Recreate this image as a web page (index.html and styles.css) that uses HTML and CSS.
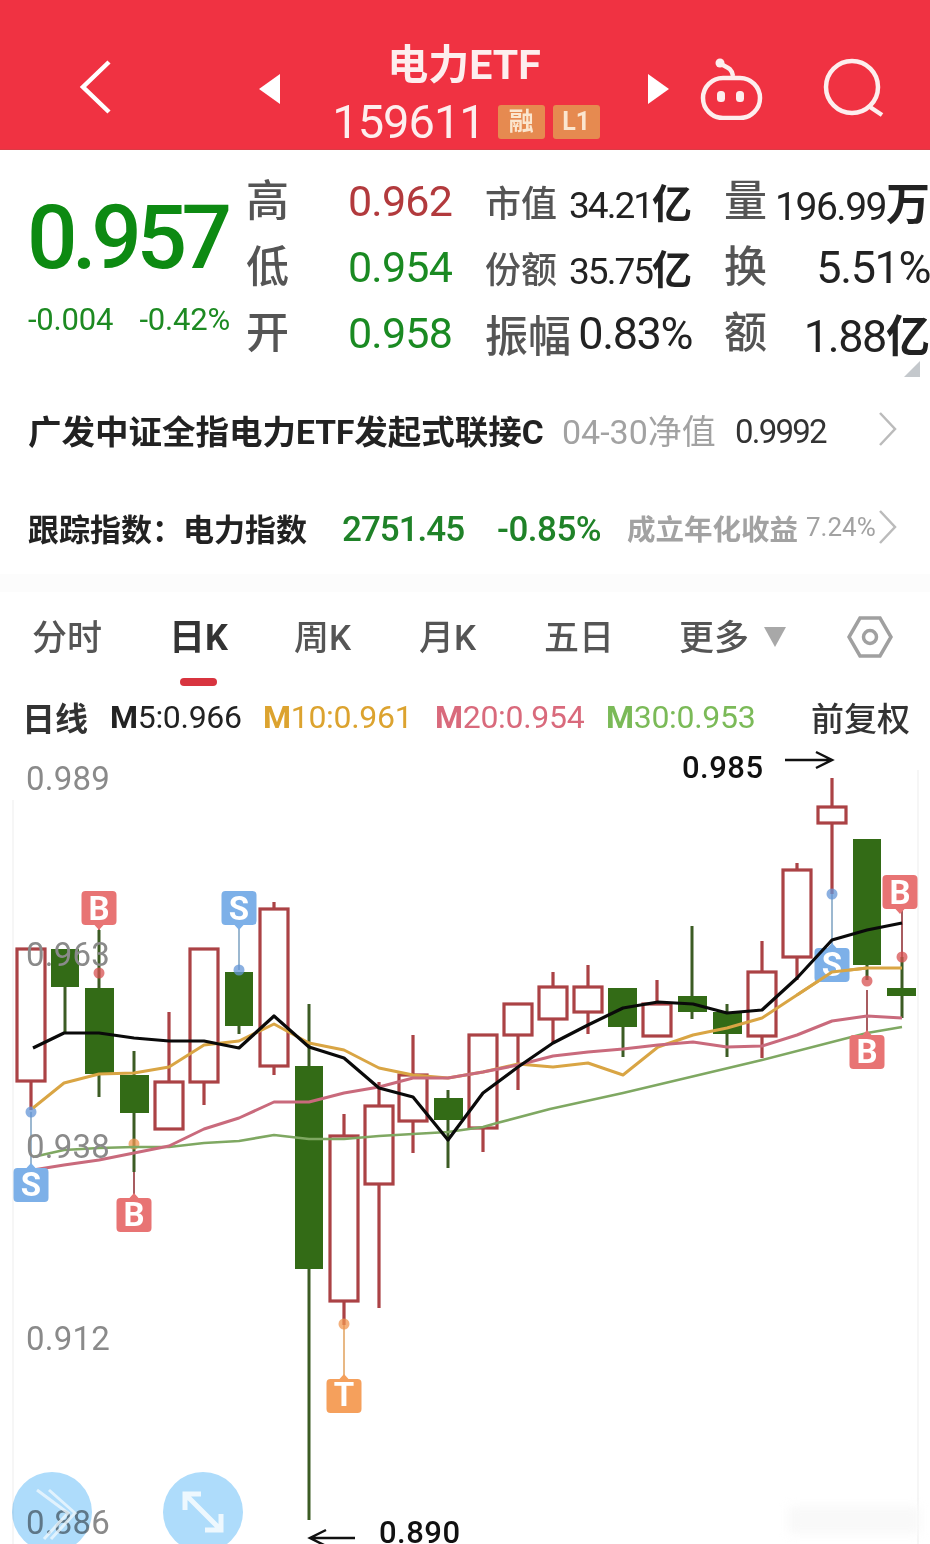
FILE: index.html
```html
<!DOCTYPE html>
<html lang="zh-CN">
<head>
    <meta charset="UTF-8">
    <title>电力ETF</title>
    <link rel="stylesheet" href="styles.css">
</head>
<body>
<div class="page">
    <header class="topbar">
        <svg class="icon-back" viewBox="0 0 36 56"><path d="M31 3L5 28l26 25"/></svg>
        <svg class="icon-tri" viewBox="0 0 26 32"><path d="M24 1L3 16l21 15z"/></svg>
        <div class="title">
            <div class="title-name">电力ETF</div>
            <div class="title-code">
                <span class="code-num">159611</span>
                <span class="tag">融</span>
                <span class="tag">L1</span>
            </div>
        </div>
        <svg class="icon-tri" viewBox="0 0 26 32"><path d="M2 1l21 15L2 31z"/></svg>
        <svg class="icon-robot" viewBox="0 0 66 62">
            <path d="M35 18C34 10 28 9 23 6"/>
            <circle class="solid" cx="22" cy="5" r="4.5"/>
            <rect x="5" y="20" width="57" height="40" rx="20"/>
            <rect class="solid" x="19" y="33" width="8" height="11" rx="3.5"/>
            <rect class="solid" x="38" y="33" width="8" height="11" rx="3.5"/>
        </svg>
        <svg class="icon-search" viewBox="0 0 64 64">
            <circle cx="30" cy="30" r="26"/>
            <path d="M48 50l12 8"/>
        </svg>
    </header>

    <section class="quote">
        <div class="price">
            <div class="price-now">0.957</div>
            <div class="price-change"><span>-0.004</span><span>-0.42%</span></div>
        </div>
        <div class="stats">
            <span class="stat-label">高</span><span class="stat-value red">0.962</span>
            <div class="stat-pair"><span class="pair-label">市值</span><span class="pair-value">34.21<b>亿</b></span></div>
            <div class="stat-pair wide"><span class="stat-label">量</span><span class="pair-value mid">196.99<b>万</b></span></div>

            <span class="stat-label">低</span><span class="stat-value green">0.954</span>
            <div class="stat-pair"><span class="pair-label">份额</span><span class="pair-value">35.75<b>亿</b></span></div>
            <div class="stat-pair wide"><span class="stat-label">换</span><span class="pair-value big">5.51%</span></div>

            <span class="stat-label">开</span><span class="stat-value green">0.958</span>
            <div class="stat-pair"><span class="pair-label large">振幅</span><span class="pair-value big">0.83%</span></div>
            <div class="stat-pair wide"><span class="stat-label">额</span><span class="pair-value big">1.88<b>亿</b></span></div>
        </div>
        <span class="corner"></span>
    </section>

    <section class="fund-row first">
        <span class="fund-name">广发中证全指电力ETF发起式联接C</span>
        <span class="fund-date">04-30净值</span>
        <span class="fund-nav">0.9992</span>
        <svg class="chevron" viewBox="0 0 20 36"><path d="M2 2l15 16L2 34"/></svg>
    </section>
    <section class="fund-row second">
        <span class="index-name">跟踪指数：电力指数</span>
        <span class="index-val">2751.45</span>
        <span class="index-pct">-0.85%</span>
        <span class="index-yield">成立年化收益</span>
        <span class="index-yield-num">7.24%</span>
        <svg class="chevron" viewBox="0 0 20 36"><path d="M2 2l15 16L2 34"/></svg>
    </section>
    <div class="band"></div>

    <nav class="tabs">
        <span class="tab">分时</span>
        <span class="tab active">日K</span>
        <span class="tab">周K</span>
        <span class="tab">月K</span>
        <span class="tab">五日</span>
        <span class="tab more">更多<i class="more-arrow"></i></span>
        <svg class="icon-hex" viewBox="0 0 46 42">
            <path d="M13 2h20l11 19-11 19H13L2 21z"/>
            <circle cx="23" cy="21" r="6.5"/>
        </svg>
    </nav>

    <div class="legend">
        <span class="legend-name">日线</span>
        <span class="ma m5"><b>M</b>5:0.966</span>
        <span class="ma m10"><b>M</b>10:0.961</span>
        <span class="ma m20"><b>M</b>20:0.954</span>
        <span class="ma m30"><b>M</b>30:0.953</span>
        <span class="legend-adj">前复权</span>
    </div>

    <svg class="chart" viewBox="0 745 930 799">
        <defs>
            <path id="flag-down" d="M-13.5 0h27a4 4 0 0 1 4 4v26a4 4 0 0 1-4 4h-9l-4.5 5-4.5-5h-9a4 4 0 0 1-4-4V4a4 4 0 0 1 4-4z"/>
            <path id="flag-up" d="M-13.5 0h27a4 4 0 0 0 4-4v-26a4 4 0 0 0-4-4h-9l-4.5-5-4.5 5h-9a4 4 0 0 0-4 4v26a4 4 0 0 0 4 4z"/>
        </defs>

        <!-- 边框 -->
        <path class="frame" d="M13 800V1544M918 770V1544"/>
        <rect class="smudge" x="788" y="1506" width="132" height="28" rx="4"/>

        <!-- 信号连线 -->
        <path class="sig-b" d="M99 925V972M134 1143V1198M867 990V1035M902 905V957"/>
        <path class="sig-s" d="M31 1112V1170M239 925V970M832 894V950"/>
        <path class="sig-t" d="M344 1324V1378"/>

        <!-- 阳线 -->
        <g class="up">
            <path d="M31 1081V1110M169 1012V1082M204 1082V1105M274 902V909M274 1066V1075M344 1114V1136M344 1301V1325M379 1082V1106M379 1184V1308M413 1035V1075M413 1121V1153M483 1128V1152M518 1035V1090M553 972V987M553 1019V1043M588 965V987M588 1012V1034M657 980V1004M762 941V972M762 1036V1058M797 863V870M797 957V980M832 778V807M832 823V894"/>
            <rect x="17" y="949" width="28" height="132"/>
            <rect x="155" y="1082" width="28" height="47"/>
            <rect x="190" y="949" width="28" height="133"/>
            <rect x="260" y="909" width="28" height="157"/>
            <rect x="330" y="1136" width="28" height="165"/>
            <rect x="365" y="1106" width="28" height="78"/>
            <rect x="399" y="1075" width="28" height="46"/>
            <rect x="469" y="1035" width="28" height="93"/>
            <rect x="504" y="1004" width="28" height="31"/>
            <rect x="539" y="987" width="28" height="32"/>
            <rect x="574" y="987" width="28" height="25"/>
            <rect x="643" y="1004" width="28" height="32"/>
            <rect x="748" y="972" width="28" height="64"/>
            <rect x="783" y="870" width="28" height="87"/>
            <rect x="818" y="807" width="28" height="16"/>
        </g>

        <!-- 阴线 -->
        <g class="down">
            <path d="M65 987V1033M99 930V1097M134 1051V1172M239 1026V1034M309 1004V1520M448 1090V1168M623 1027V1057M692 926V1019M727 1004V1057M867 965V980M902 957V1018"/>
            <rect x="51" y="949" width="28" height="38"/>
            <rect x="85" y="988" width="29" height="86"/>
            <rect x="120" y="1075" width="29" height="38"/>
            <rect x="225" y="972" width="28" height="54"/>
            <rect x="295" y="1066" width="28" height="203"/>
            <rect x="434" y="1098" width="29" height="22"/>
            <rect x="608" y="988" width="29" height="39"/>
            <rect x="678" y="996" width="29" height="16"/>
            <rect x="713" y="1012" width="29" height="22"/>
            <rect x="853" y="839" width="28" height="126"/>
            <rect x="887" y="988" width="29" height="8"/>
        </g>

        <!-- 信号圆点 -->
        <circle class="dot-s" cx="31" cy="1112" r="5.5"/>
        <circle class="dot-b" cx="99" cy="973" r="5.5"/>
        <circle class="dot-t" cx="134" cy="1144" r="5.5"/>
        <circle class="dot-s" cx="239" cy="970" r="5.5"/>
        <circle class="dot-t" cx="344" cy="1324" r="5.5"/>
        <circle class="dot-s" cx="832" cy="894" r="5.5"/>
        <circle class="dot-b" cx="867" cy="981" r="5.5"/>
        <circle class="dot-b" cx="902" cy="957" r="5.5"/>

        <!-- 均线 -->
        <polyline class="line m30-line" points="33,1157 64,1150 99,1148 134,1147 169,1147 204,1143 239,1141 274,1135 309,1139 344,1139 379,1136 413,1134 448,1132 483,1127 497,1123 550,1109 623,1093 762,1060 867,1033 902,1027"/>
        <polyline class="line m10-line" points="33,1108 64,1083 99,1074 134,1073 169,1067 204,1045 239,1041 274,1024 309,1043 344,1050 379,1068 413,1075 448,1078 483,1072 518,1064 553,1067 588,1063 623,1075 658,1047 693,1035 727,1028 762,1018 797,995 832,972 867,968 902,968"/>
        <polyline class="line m20-line" points="33,1170 64,1165 99,1160 134,1153 169,1146 204,1129 239,1118 274,1102 309,1102 344,1093 379,1087 413,1078 448,1078 483,1072 518,1065 553,1056 588,1052 623,1049 658,1045 693,1042 727,1047 762,1046 797,1035 832,1021 867,1016 902,1018"/>

        <!-- 标记 -->
        <g class="flag flag-b"><use href="#flag-down" x="99" y="891"/><text x="99" y="920">B</text></g>
        <g class="flag flag-s"><use href="#flag-down" x="239" y="891"/><text x="239" y="920">S</text></g>
        <g class="flag flag-b"><use href="#flag-down" x="900" y="875"/><text x="900" y="904">B</text></g>
        <g class="flag flag-s"><use href="#flag-up" x="31" y="1202"/><text x="31" y="1196">S</text></g>
        <g class="flag flag-b"><use href="#flag-up" x="134" y="1232"/><text x="134" y="1226">B</text></g>
        <g class="flag flag-t"><use href="#flag-up" x="344" y="1413"/><text x="344" y="1406">T</text></g>
        <g class="flag flag-b"><use href="#flag-up" x="867" y="1069"/><text x="867" y="1063">B</text></g>
        <g class="flag flag-s"><use href="#flag-up" x="832" y="982"/><text x="832" y="976">S</text></g>

        <polyline class="line m10-line" points="797,995 832,972 867,968"/>
        <polyline class="line m5-line" points="33,1048 64,1033 99,1033 134,1038 169,1041 204,1041 239,1048 274,1016 309,1047 344,1058 379,1088 413,1097 448,1140 483,1093 518,1067 553,1043 588,1025 623,1008 658,1002 693,1004 727,1013 762,1010 797,978 832,940 867,930 902,923"/>

        <!-- 纵轴 -->
        <text class="axis" x="26" y="790">0.989</text>
        <text class="axis" x="26" y="966">0.963</text>
        <text class="axis" x="26" y="1158">0.938</text>
        <text class="axis" x="26" y="1350">0.912</text>
        <text class="axis" x="26" y="1534">0.886</text>

        <!-- 手写标注 -->
        <text class="note" x="682" y="778">0.985</text>
        <path class="arrow" d="M785 760H831M816 752l16 8-16 8"/>
        <text class="note" x="379" y="1543">0.890</text>
        <path class="arrow" d="M355 1538H310M326 1530l-16 8 16 8"/>

        <!-- 浮动按钮 -->
        <circle class="float" cx="52" cy="1512" r="40"/>
        <path class="float-icon thin" d="M37 1490l31 23-24 26M49 1490l26 23-24 26"/>
        <circle class="float" cx="203" cy="1512" r="40"/>
        <path class="float-icon" d="M185 1494l36 36M185 1510v-16h16M221 1514v16h-16"/>
    </svg>
</div>
</body>
</html>
```

FILE: styles.css
```css
*{
    box-sizing: border-box;
}
body{
    margin: 0;
    background: #fff;
    font-family: Roboto, "Noto Sans CJK SC", sans-serif;
}
.page{
    width: 930px;
    height: 1544px;
    overflow: hidden;
}

/* 顶部红条 */
.topbar{
    display: flex;
    align-items: center;
    height: 150px;
    padding: 44px 0 0 78px;
    background: #f03242;
    border-bottom: 1px solid #dc3a45;
    color: #fff;
}
.topbar svg{
    flex: none;
}
.icon-back{
    width: 36px;
    height: 56px;
    margin: -19px 142px 0 0;
    fill: none;
    stroke: #fff;
    stroke-width: 4.5;
}
.icon-tri{
    width: 26px;
    height: 32px;
    margin-top: -15px;
    fill: #fff;
}
.title{
    width: 364px;
    margin-top: -3px;
    text-align: center;
}
.title-name{
    font-size: 41px;
    font-weight: 700;
    line-height: 46px;
    color: #fdeeee;
}
.title-code{
    display: flex;
    align-items: center;
    justify-content: center;
    gap: 8px;
    margin-top: 8px;
    padding-left: 4px;
}
.code-num{
    font-size: 47px;
    line-height: 52px;
    letter-spacing: -1px;
    margin-right: 5px;
    color: #fdeeee;
}
.tag{
    width: 47px;
    height: 34px;
    border-radius: 3px;
    background: #e68a50;
    color: #fbe6cf;
    font-size: 25px;
    font-weight: 700;
    line-height: 34px;
}
.icon-robot{
    width: 66px;
    height: 62px;
    margin: -15px 0 0 26px;
    fill: none;
    stroke: #fdeeee;
    stroke-width: 4.5;
}
.icon-robot .solid{
    fill: #fdeeee;
    stroke: none;
}
.icon-search{
    width: 64px;
    height: 64px;
    margin: -15px 0 0 58px;
    fill: none;
    stroke: #fdeeee;
    stroke-width: 4.5;
}

/* 行情 */
.quote{
    position: relative;
    display: flex;
    height: 230px;
    padding: 18px 0 0 28px;
}
.price{
    width: 218px;
    flex: none;
}
.price-now{
    font-size: 89px;
    line-height: 100px;
    letter-spacing: -5.5px;
    margin: 20px 0 0 -1px;
    font-weight: 500;
    color: #0d8a12;
}
.price-change{
    display: flex;
    justify-content: space-between;
    width: 202px;
    margin-top: 14px;
    font-size: 31px;
    line-height: 36px;
    letter-spacing: -0.2px;
    color: #1d8a22;
}
.stats{
    display: grid;
    grid-template-columns: 102px 104px 272px 206px;
    grid-auto-rows: 66px;
    align-items: center;
}
.stat-label{
    font-size: 43px;
    font-weight: 500;
    line-height: 66px;
    color: #555;
}
.stat-value{
    font-size: 43px;
    letter-spacing: -0.8px;
}
.red{
    color: #b23a3d;
}
.green{
    color: #1a8a22;
}
.stat-pair{
    display: flex;
    justify-content: space-between;
    align-items: center;
    margin-left: 33px;
    width: 207px;
    white-space: nowrap;
}
.stat-pair.wide{
    margin-left: 0;
    width: 206px;
}
.pair-label{
    font-size: 36px;
    font-weight: 500;
    color: #555;
}
.pair-label.large{
    font-size: 43px;
}
.pair-value{
    font-size: 37px;
    letter-spacing: -2px;
    color: #222;
}
.pair-value.mid{
    font-size: 39px;
    letter-spacing: -1.5px;
}
.pair-value.big{
    font-size: 45px;
    letter-spacing: -1.4px;
}
.pair-value b{
    font-size: 40px;
    letter-spacing: 0;
}
.pair-value.mid b,
.pair-value.big b{
    font-size: 44px;
}
.corner{
    position: absolute;
    right: 10px;
    bottom: 3px;
    width: 16px;
    height: 16px;
    background: #c4c8cc;
    clip-path: polygon(100% 0, 100% 100%, 0 100%);
}

/* 基金 */
.fund-row{
    display: flex;
    align-items: center;
    padding-left: 28px;
    white-space: nowrap;
}
.fund-row.first{
    height: 102px;
    padding-bottom: 4px;
}
.fund-row.second{
    height: 92px;
    padding-bottom: 2px;
}
.fund-name{
    width: 534px;
    font-size: 33.5px;
    font-weight: 700;
    color: #222;
}
.fund-date{
    width: 173px;
    font-size: 34px;
    color: #a2a2a2;
}
.fund-nav{
    width: 143px;
    margin-top: 4px;
    font-size: 33px;
    letter-spacing: -1.8px;
    color: #333;
}
.chevron{
    width: 20px;
    height: 36px;
    fill: none;
    stroke: #bbb;
    stroke-width: 2.5;
}
.index-name{
    width: 314px;
    font-size: 31px;
    font-weight: 700;
    color: #222;
}
.index-val{
    width: 155px;
    margin-top: 4px;
    font-size: 35px;
    font-weight: 500;
    letter-spacing: -1px;
    color: #1f8228;
}
.index-pct{
    width: 130px;
    margin-top: 4px;
    font-size: 35px;
    font-weight: 500;
    letter-spacing: -0.5px;
    color: #1f8228;
}
.index-yield{
    width: 179px;
    font-size: 28.5px;
    font-weight: 700;
    color: #a2a2a2;
}
.index-yield-num{
    width: 72px;
    font-size: 26px;
    color: #a2a2a2;
}
.band{
    height: 18px;
    background: #fcfcfc;
}

/* 周期 */
.tabs{
    display: flex;
    align-items: center;
    height: 92px;
    padding: 0 0 8px 32px;
    font-size: 35px;
    font-weight: 500;
    color: #555;
}
.tab{
    position: relative;
    width: 125px;
    flex: none;
}
.tab.active{
    margin-left: 12px;
    font-size: 36px;
    font-weight: 700;
    color: #333;
}
.tab.active:after{
    content: "";
    position: absolute;
    left: 11px;
    bottom: -26px;
    width: 37px;
    height: 8px;
    border-radius: 4px;
    background: #d8343f;
}
.tab.more{
    display: flex;
    align-items: center;
    width: 168px;
    margin-left: 10px;
}
.more-arrow{
    width: 0;
    height: 0;
    margin: 6px 0 0 15px;
    border-style: solid;
    border-width: 20px 11px 0;
    border-color: #a8a8a8 transparent transparent;
}
.icon-hex{
    width: 46px;
    height: 42px;
    margin-top: 6px;
    fill: none;
    stroke: #a0a0a0;
    stroke-width: 3.5;
}

/* 均线图例 */
.legend{
    display: flex;
    align-items: center;
    height: 61px;
    padding: 5px 19px 0 22px;
    font-size: 32px;
    white-space: nowrap;
}
.legend-name{
    width: 88px;
    font-size: 33px;
    font-weight: 700;
    color: #333;
}
.ma{
    letter-spacing: -0.3px;
}
.ma b{
    font-weight: 700;
}
.m5{
    width: 153px;
    color: #222;
}
.m10{
    width: 172px;
    color: #dca32f;
}
.m20{
    width: 171px;
    color: #d96a7c;
}
.m30{
    width: 205px;
    color: #7bba58;
}
.legend-adj{
    font-size: 33px;
    font-weight: 500;
    color: #333;
}

/* K线 */
.chart{
    display: block;
    width: 930px;
    height: 799px;
}
.frame{
    fill: none;
    stroke: #f6f6f6;
    stroke-width: 2;
}
.smudge{
    fill: #f9f9f9;
    filter: blur(5px);
}
.up{
    fill: #fff;
    stroke: #ab4245;
    stroke-width: 3.2;
}
.down{
    fill: #336b16;
    stroke: none;
}
.down path{
    fill: none;
    stroke: #3c5c24;
    stroke-width: 3;
}
.sig-b,
.sig-s,
.sig-t{
    fill: none;
    stroke-width: 2;
}
.sig-b{
    stroke: #a85c60;
}
.sig-s{
    stroke: #9cb8d0;
}
.sig-t{
    stroke: #e8b884;
}
.dot-s{
    fill: rgba(100, 150, 215, .75);
}
.dot-b{
    fill: rgba(215, 80, 80, .75);
}
.dot-t{
    fill: rgba(240, 150, 80, .75);
}
.line{
    fill: none;
    stroke-width: 3;
    stroke-linejoin: round;
}
.m5-line{
    stroke: #0a0a0a;
    stroke-width: 3.2;
}
.m10-line{
    stroke: #d9a544;
}
.m20-line{
    stroke: #c96a7c;
}
.m30-line{
    stroke: #7fa862;
    stroke-width: 2.6;
}
.flag text{
    fill: #fff;
    font-size: 33px;
    font-weight: 700;
    text-anchor: middle;
}
.flag-b use{
    fill: #e87474;
}
.flag-s use{
    fill: #7db0e8;
}
.flag-t use{
    fill: #f5a05c;
}
.axis{
    fill: #8a8a8a;
    font-size: 33px;
    letter-spacing: .2px;
}
.note{
    fill: #111;
    font-size: 31px;
    font-weight: 500;
    letter-spacing: .5px;
}
.arrow{
    fill: none;
    stroke: #111;
    stroke-width: 2.5;
}
.float{
    fill: #aedcfb;
    mix-blend-mode: multiply;
}
.float-icon{
    fill: none;
    stroke: #eef8fe;
    stroke-width: 5;
}
.float-icon.thin{
    stroke-width: 3;
    opacity: .8;
}
```
